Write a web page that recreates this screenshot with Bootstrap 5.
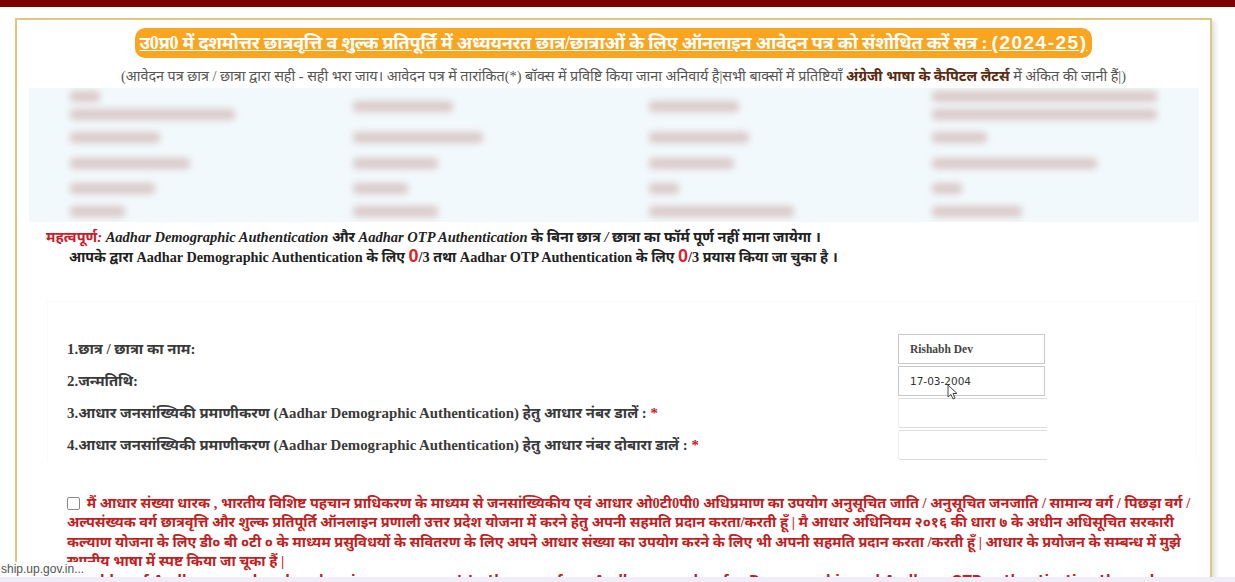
<!DOCTYPE html>
<html lang="hi">
<head>
<meta charset="utf-8">
<title>Aadhar Authentication</title>
<link href="https://cdn.jsdelivr.net/npm/bootstrap@5.3.0/dist/css/bootstrap.min.css" rel="stylesheet">
<style>
html,body{height:582px;overflow:hidden;background:#fff}
body{font-family:"Liberation Serif","Noto Sans",serif;color:#222;position:relative}
.topstrip{height:7px;background:#7d0000}
.panel-wrap{padding:11px 23px 0 15px}
.panel-box{border:2px solid #e0c77f;border-bottom:0;box-shadow:3px 3px 5px #ddd;height:600px;padding:8px 12px 0 12px}
.title-line{font-size:18px;line-height:30px;height:30px}
.title-pill{display:inline-block;background:#f9a51f;color:#fff;border-radius:10px;padding:0 5px;text-decoration:underline;font-weight:700;white-space:nowrap;letter-spacing:-.2px}
.title-year{font-family:"Liberation Sans",sans-serif;font-size:19px;letter-spacing:1.5px}
.sub-line{font-size:14.35px;line-height:20px;color:#555;margin-top:8px;padding-left:20px;white-space:nowrap}
.sub-line b{color:#5a2b10}
.blur-area{height:134px;margin-top:2px;background:#f2f9fc;display:grid;grid-template-columns:283px 296px 283px 1fr;grid-template-rows:16px 20px 27px 25px 24px 22px;grid-auto-flow:column;padding-left:41px;margin-right:-1px;overflow:hidden}
.blur-bar{height:11px;align-self:center;background:#dac9c9;filter:blur(3.5px);border-radius:4px}
.span-two{grid-row:span 2}
.bw-30{width:30px}.bw-55{width:55px}.bw-85{width:85px}.bw-90{width:90px}.bw-100{width:100px}.bw-120{width:120px}.bw-130{width:130px}.bw-145{width:145px}.bw-165{width:165px}.bw-225{width:225px}
.note-one{font-size:14.5px;font-weight:700;font-style:italic;line-height:16px;margin:7px 0 0 17px;white-space:nowrap;color:#222}
.note-one span{color:#c8202a}
.note-two{font-size:14.26px;font-weight:700;line-height:20px;margin:1px 0 0 40px;white-space:nowrap;color:#222}
.note-two span{color:#d8232a;font-size:18px;font-family:"Liberation Sans",sans-serif}
.form-zone{margin:34px 0 0 18px;padding:31px 20px 0 19px;border:1px solid #fafafa;border-bottom:0;width:1150px}
.form-line{height:32px;display:flex;justify-content:space-between;align-items:center}
.form-label-text{font-size:14.85px;font-weight:700;color:#3a3a3a;white-space:nowrap}
.form-label-text em{color:#c8202a;font-style:normal}
.form-field{width:147px;height:30px;border:1px solid #c9c9c9;font-size:11.5px;font-weight:700;color:#444;padding:0 11px;line-height:28px;margin-right:131px;flex:none;background:#fff}
.form-field.date-value{font:400 10.5px/28px "DejaVu Sans",sans-serif;color:#333}
.form-field.faint{border-color:#eee;border-top-color:#ddd;border-bottom-color:#ddd;border-right-color:transparent;width:150px;margin-right:128px;border-radius:2px}
.consent-text{margin:33px 0 0 38px;color:#c01f24;font-size:14.5px;font-weight:700;line-height:19.3px;width:1130px}
.consent-box{width:13px;height:13px;border:1.5px solid #8a8a8a;border-radius:2px;display:inline-block;vertical-align:-2px;margin-right:3px}
.consent-latin{font-family:"DejaVu Sans",sans-serif;font-size:13.2px;white-space:nowrap}
.status-tip{position:absolute;left:0;top:562px;height:15px;width:100px;background:#fbfbfb;font:12px/14px "Liberation Sans",sans-serif;color:#555;padding-left:1px;white-space:nowrap;overflow:hidden}
.edge-strip{position:absolute;left:0;right:0;bottom:0;height:5px;background:#f1ecfa}
.pointer-mark{position:absolute;left:947px;top:384px}
</style>
</head>
<body>
<div class="topstrip"></div>
<div class="panel-wrap">
  <div class="panel-box">
    <div class="title-line text-center"><span class="title-pill">उ0प्र0 में दशमोत्तर छात्रवृत्ति व शुल्क प्रतिपूर्ति में अध्ययनरत छात्र/छात्राओं के लिए ऑनलाइन आवेदन पत्र को संशोधित करें सत्र : <span class="title-year">(2024-25)</span></span></div>
    <div class="sub-line text-center">(आवेदन पत्र छात्र / छात्रा द्वारा सही - सही भरा जाय। आवेदन पत्र में तारांकित(*) बॉक्स में प्रविष्टि किया जाना अनिवार्य है|सभी बाक्सों में प्रतिष्टियाँ <b>अंग्रेजी भाषा के कैपिटल लैटर्स</b> में अंकित की जानी हैं|)</div>
    <div class="blur-area">
      <div class="blur-bar bw-30"></div><div class="blur-bar bw-165"></div><div class="blur-bar bw-90"></div><div class="blur-bar bw-120"></div><div class="blur-bar bw-85"></div><div class="blur-bar bw-55"></div>
      <div class="blur-bar span-two bw-100"></div><div class="blur-bar bw-130"></div><div class="blur-bar bw-85"></div><div class="blur-bar bw-55"></div><div class="blur-bar bw-85"></div>
      <div class="blur-bar span-two bw-90"></div><div class="blur-bar bw-100"></div><div class="blur-bar bw-85"></div><div class="blur-bar bw-30"></div><div class="blur-bar bw-145"></div>
      <div class="blur-bar bw-225"></div><div class="blur-bar bw-225"></div><div class="blur-bar bw-55"></div><div class="blur-bar bw-165"></div><div class="blur-bar bw-30"></div><div class="blur-bar bw-90"></div>
    </div>
    <div class="note-one"><span>महत्वपूर्ण:</span> Aadhar Demographic Authentication और Aadhar OTP Authentication के बिना छात्र / छात्रा का फॉर्म पूर्ण नहीं माना जायेगा ।</div>
    <div class="note-two">आपके द्वारा Aadhar Demographic Authentication के लिए <span>0</span>/3 तथा Aadhar OTP Authentication के लिए <span>0</span>/3 प्रयास किया जा चुका है ।</div>
    <div class="form-zone">
      <div class="form-line"><div class="form-label-text">1.छात्र / छात्रा का नाम:</div><div class="form-field">Rishabh Dev</div></div>
      <div class="form-line"><div class="form-label-text">2.जन्मतिथि:</div><div class="form-field date-value">17-03-2004</div></div>
      <div class="form-line"><div class="form-label-text">3.आधार जनसांख्यिकी प्रमाणीकरण (Aadhar Demographic Authentication) हेतु आधार नंबर डालें : <em>*</em></div><div class="form-field faint"></div></div>
      <div class="form-line"><div class="form-label-text">4.आधार जनसांख्यिकी प्रमाणीकरण (Aadhar Demographic Authentication) हेतु आधार नंबर दोबारा डालें : <em>*</em></div><div class="form-field faint"></div></div>
    </div>
    <div class="consent-text"><span class="consent-box"></span> मैं आधार संख्या धारक , भारतीय विशिष्ट पहचान प्राधिकरण के माध्यम से जनसांख्यिकीय एवं आधार ओ0टी0पी0 अधिप्रमाण का उपयोग अनुसूचित जाति / अनुसूचित जनजाति / सामान्य वर्ग / पिछड़ा वर्ग / अल्पसंख्यक वर्ग छात्रवृत्ति और शुल्क प्रतिपूर्ति ऑनलाइन प्रणाली उत्तर प्रदेश योजना में करने हेतु अपनी सहमति प्रदान करता/करती हूँ | मै आधार अधिनियम २०१६ की धारा ७ के अधीन अधिसूचित सरकारी कल्याण योजना के लिए डी० बी ०टी ० के माध्यम प्रसुविधयों के सवितरण के लिए अपने आधार संख्या का उपयोग करने के लिए भी अपनी सहमति प्रदान करता /करती हूँ | आधार के प्रयोजन के सम्बन्ध में मुझे स्थानीय भाषा में स्पष्ट किया जा चूका हैं |<br><span class="consent-latin">I, holder of Aadhaar number, hereby give my consent to the use of my Aadhaar number for Demographic and Aadhaar OTP authentication through</span></div>
  </div>
</div>
<svg class="pointer-mark" width="12" height="17" viewBox="0 0 12 17"><path d="M1 1v12l3-2.500 2 4.500 2-1-2-4.500h4z" fill="#fff" stroke="#444" stroke-width="1"/></svg>
<div class="edge-strip"></div>
<div class="status-tip">ship.up.gov.in...</div>
<script src="https://cdn.jsdelivr.net/npm/bootstrap@5.3.0/dist/js/bootstrap.bundle.min.js"></script>
</body>
</html>
